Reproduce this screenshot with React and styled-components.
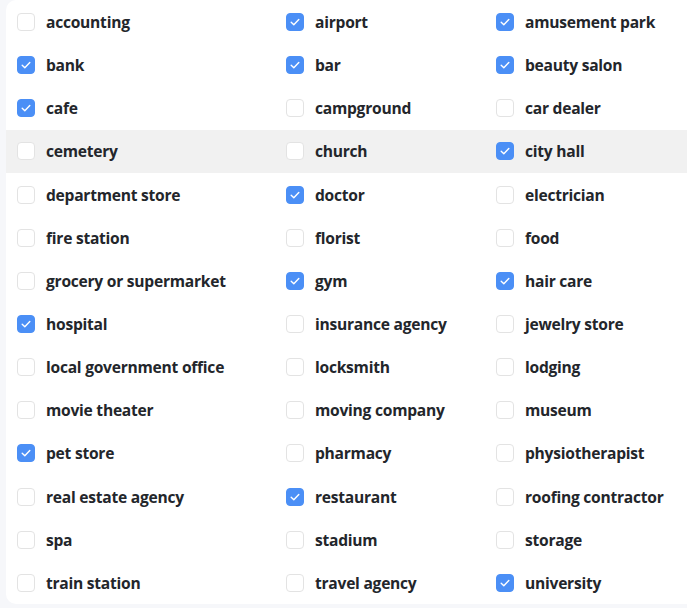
import React from "react";
import styled, { createGlobalStyle } from "styled-components";

const GlobalStyle = createGlobalStyle`
  html, body {
    margin: 0;
    padding: 0;
    background: #f6f7fa;
  }
  body {
    font-family: "Open Sans", "Noto Sans", sans-serif;
  }
`;

const Page = styled.div`
  padding: 0 0 3px 6px;
  width: 687px;
  height: 608px;
  box-sizing: border-box;
  overflow: hidden;
`;

const Card = styled.div`
  background: #fff;
  border-radius: 10px 0 0 10px;
  padding-top: 0.5px;
  display: grid;
  grid-template-columns: 280px 210px 1fr;
  grid-auto-rows: 43.15px;
`;

const Cell = styled.label`
  display: flex;
  align-items: center;
  gap: 11px;
  padding-left: ${(p) => (p.first ? "11px" : "0")};
  background: ${(p) => (p.hover ? "#f1f1f1" : "transparent")};
  cursor: pointer;
`;

const Box = styled.span`
  width: 18px;
  height: 18px;
  box-sizing: border-box;
  border-radius: 4px;
  flex-shrink: 0;
  display: flex;
  align-items: center;
  justify-content: center;
  background: ${(p) => (p.checked ? "#4b8ff6" : "#fff")};
  border: 1px solid ${(p) => (p.checked ? "#4b8ff6" : "#e3e3e3")};
`;

const Label = styled.span`
  font-size: 15.6px;
  font-weight: 700;
  color: #23262b;
  letter-spacing: -0.25px;
  white-space: nowrap;
`;

const items = [
  ["accounting", 0], ["airport", 1], ["amusement park", 1],
  ["bank", 1], ["bar", 1], ["beauty salon", 1],
  ["cafe", 1], ["campground", 0], ["car dealer", 0],
  ["cemetery", 0], ["church", 0], ["city hall", 1],
  ["department store", 0], ["doctor", 1], ["electrician", 0],
  ["fire station", 0], ["florist", 0], ["food", 0],
  ["grocery or supermarket", 0], ["gym", 1], ["hair care", 1],
  ["hospital", 1], ["insurance agency", 0], ["jewelry store", 0],
  ["local government office", 0], ["locksmith", 0], ["lodging", 0],
  ["movie theater", 0], ["moving company", 0], ["museum", 0],
  ["pet store", 1], ["pharmacy", 0], ["physiotherapist", 0],
  ["real estate agency", 0], ["restaurant", 1], ["roofing contractor", 0],
  ["spa", 0], ["stadium", 0], ["storage", 0],
  ["train station", 0], ["travel agency", 0], ["university", 1],
];

function Check() {
  return (
    <svg width="12" height="12" viewBox="0 0 12 12" fill="none">
      <path d="M2.2 6.3 L4.8 8.8 L9.8 3.4" stroke="#fff" strokeWidth="1.4" strokeLinecap="round" strokeLinejoin="round" />
    </svg>
  );
}

export default function App() {
  return (
    <>
      <GlobalStyle />
      <Page>
        <Card>
          {items.map(([name, checked], i) => (
            <Cell key={name} first={i % 3 === 0} hover={Math.floor(i / 3) === 3}>
              <Box checked={checked}>{checked ? <Check /> : null}</Box>
              <Label>{name}</Label>
            </Cell>
          ))}
        </Card>
      </Page>
    </>
  );
}
